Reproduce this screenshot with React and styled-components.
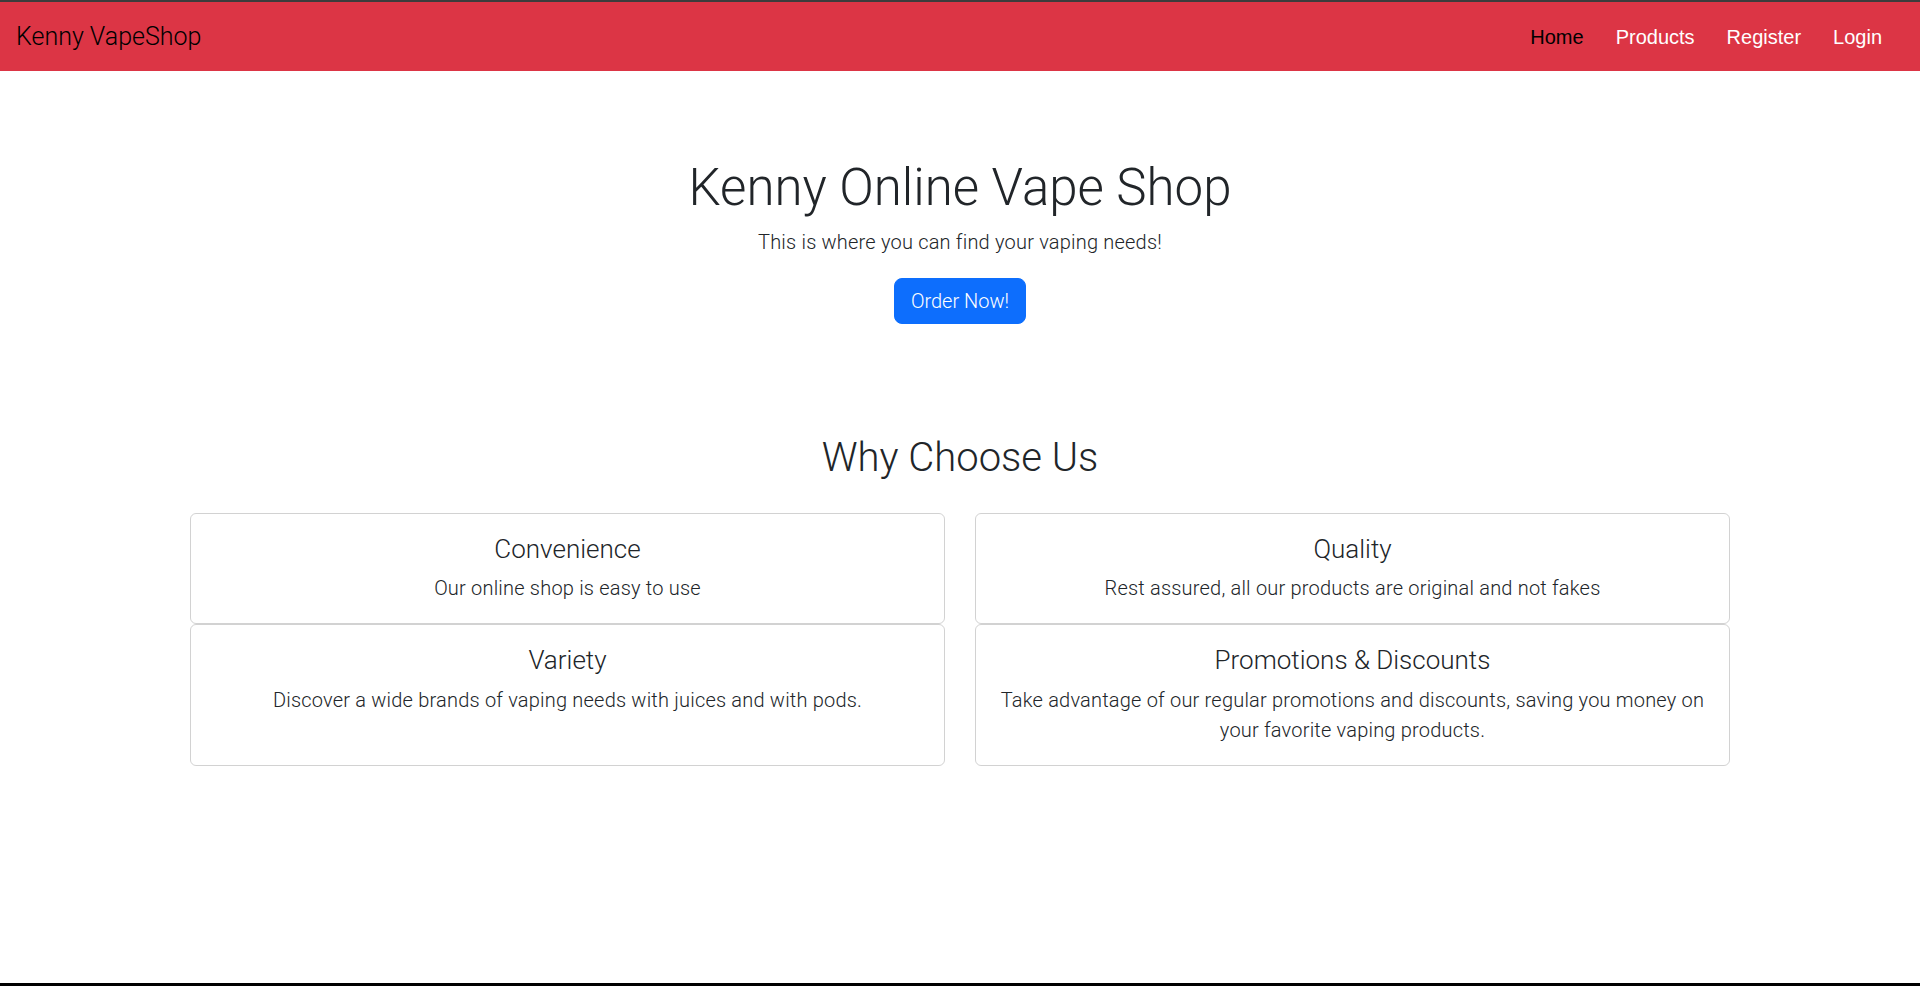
import styled, { createGlobalStyle } from "styled-components";

const GlobalStyle = createGlobalStyle`
  *, *::before, *::after { box-sizing: border-box; }
  html, body { margin: 0; padding: 0; }
  body {
    font-family: "Roboto", "Liberation Sans", sans-serif;
    font-weight: 300;
    color: #212529;
    background: #fff;
  }
`;

const features = [
  { title: "Convenience", text: "Our online shop is easy to use" },
  { title: "Quality", text: "Rest assured, all our products are original and not fakes" },
  { title: "Variety", text: "Discover a wide brands of vaping needs with juices and with pods." },
  {
    title: "Promotions & Discounts",
    text: "Take advantage of our regular promotions and discounts, saving you money on your favorite vaping products.",
  },
];

const links = ["Home", "Products", "Register", "Login"];

export default function App() {
  return (
    <Page>
      <GlobalStyle />
      <Navbar>
        <Brand href="#">Kenny VapeShop</Brand>
        <NavLinks>
          {links.map((l, i) => (
            <NavLink key={l} href="#" $active={i === 0}>
              {l}
            </NavLink>
          ))}
        </NavLinks>
      </Navbar>

      <Hero>
        <HeroTitle>Kenny Online Vape Shop</HeroTitle>
        <Lead>This is where you can find your vaping needs!</Lead>
        <OrderButton>Order Now!</OrderButton>
      </Hero>

      <Features>
        <SectionTitle>Why Choose Us</SectionTitle>
        <CardGrid>
          {features.map((f) => (
            <Card key={f.title}>
              <CardTitle>{f.title}</CardTitle>
              <CardText>{f.text}</CardText>
            </Card>
          ))}
        </CardGrid>
      </Features>
    </Page>
  );
}

const Page = styled.div`
  min-height: 100vh;
  border-top: 2px solid #3c3c3c;
  border-bottom: 3px solid #000;
  display: flex;
  flex-direction: column;
`;

const Navbar = styled.nav`
  height: 69px;
  background: #dc3545;
  display: flex;
  align-items: center;
  justify-content: space-between;
  padding: 0 22px 0 16px;
`;

const Brand = styled.a`
  font-size: 25px;
  font-weight: 300;
  color: #000;
  text-decoration: none;
`;

const NavLinks = styled.div`
  display: flex;
  align-items: center;
  padding-top: 2px;
`;

const NavLink = styled.a`
  font-family: "Liberation Sans", Arial, sans-serif;
  font-weight: 400;
  font-size: 20px;
  padding: 8px 16px;
  color: ${({ $active }) => ($active ? "#000" : "#fff")};
  text-decoration: none;
`;

const Hero = styled.section`
  display: flex;
  flex-direction: column;
  align-items: center;
  padding-top: 86px;
`;

const HeroTitle = styled.h1`
  margin: 0 0 9px;
  font-size: 51px;
  font-weight: 300;
  line-height: 1.2;
`;

const Lead = styled.p`
  margin: 0 0 21px;
  font-size: 20px;
  font-weight: 300;
  letter-spacing: 0.2px;
  line-height: 30px;
`;

const OrderButton = styled.button`
  font-family: inherit;
  font-weight: 300;
  font-size: 20px;
  line-height: 30px;
  padding: 7px 16px;
  color: #fff;
  background: #0d6efd;
  border: 1px solid #0d6efd;
  border-radius: 8px;
  cursor: pointer;
`;

const Features = styled.section`
  width: 100%;
  max-width: 1540px;
  margin: 110px auto 0;
`;

const SectionTitle = styled.h2`
  margin: 0 0 31px;
  text-align: center;
  font-size: 40px;
  font-weight: 300;
  line-height: 1.2;
`;

const CardGrid = styled.div`
  display: grid;
  grid-template-columns: 1fr 1fr;
  column-gap: 30px;
`;

const Card = styled.div`
  border: 1px solid rgba(0, 0, 0, 0.175);
  border-radius: 6px;
  padding: 20px 16px 20px;
  text-align: center;
`;

const CardTitle = styled.h5`
  margin: 0 0 8px;
  font-size: 26px;
  font-weight: 300;
  line-height: 1.2;
`;

const CardText = styled.p`
  margin: 0;
  font-size: 20px;
  font-weight: 300;
  letter-spacing: 0.2px;
  line-height: 30px;
`;
